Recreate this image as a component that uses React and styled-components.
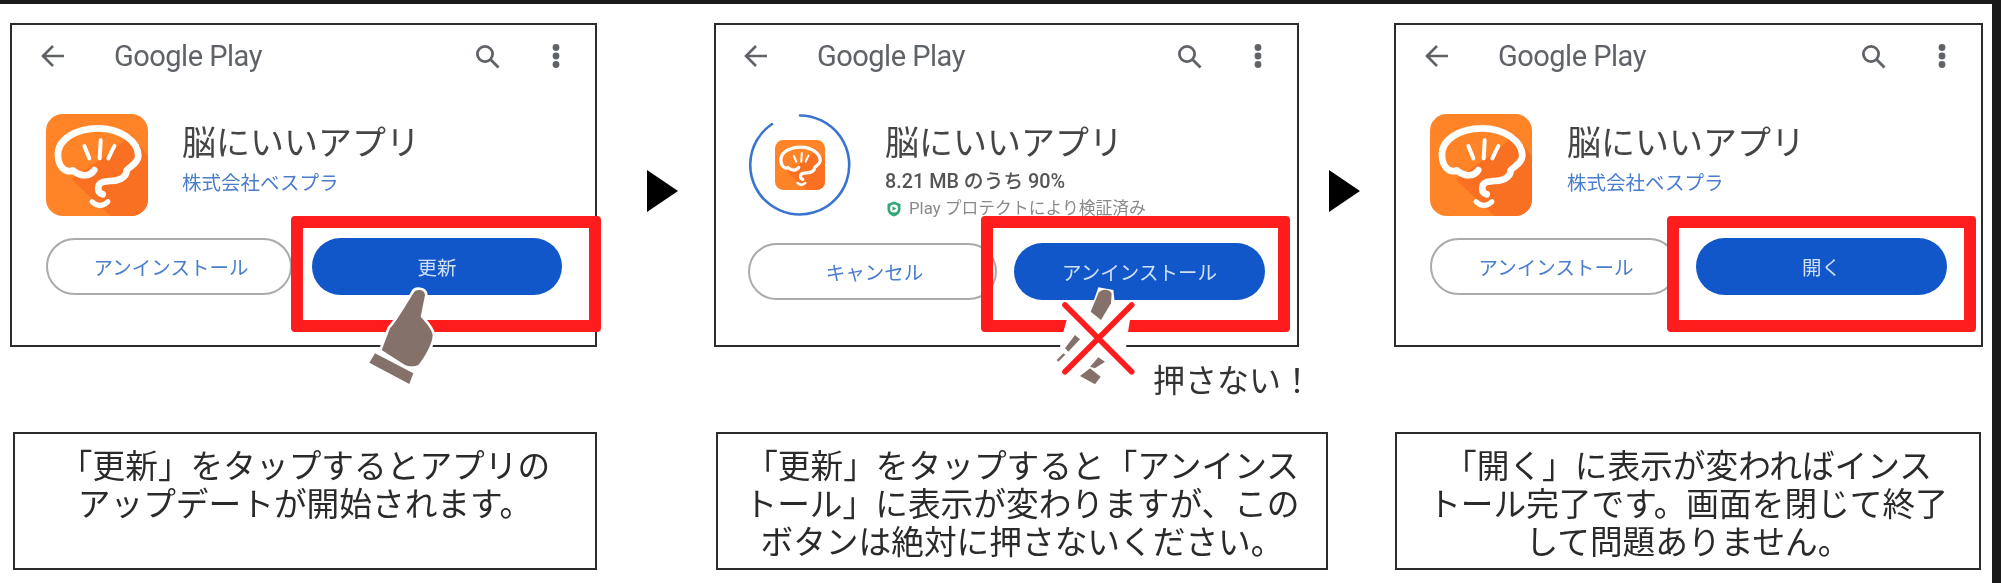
import React from "react";
import styled, { createGlobalStyle } from "styled-components";

const Global = createGlobalStyle`
  html, body { margin: 0; padding: 0; background: #fff; }
  body { font-family: "Noto Sans CJK JP", "Noto Sans", sans-serif; }
`;

const Frame = styled.div`
  width: 2001px;
  height: 583px;
  box-sizing: border-box;
  border-top: 4px solid #1a1a1a;
  border-right: 9px solid #1a1a1a;
  overflow: hidden;
  background: #fff;
`;
const Content = styled.div`
  padding: 19px 0 0 10px;
  filter: blur(0.75px);
`;
const PanelRow = styled.div`
  display: flex;
  align-items: flex-start;
`;
const Panel = styled.section`
  position: relative;
  box-sizing: border-box;
  width: ${(p) => p.$width}px;
  height: 324px;
  border: 2px solid #2c2c2c;
  padding-left: ${(p) => p.$pad}px;
  background: #fff;
`;
const Header = styled.header`
  display: flex;
  align-items: center;
  height: 62px;
  margin-left: -5px;
  padding-right: 35px;
  color: #5f6368;
`;
const Brand = styled.span`
  margin-left: 49px;
  font-family: "Roboto", sans-serif;
  font-size: 29px;
  letter-spacing: -0.5px;
  color: #5f6368;
`;
const HeaderIcons = styled.div`
  display: flex;
  align-items: center;
  gap: 52px;
  margin-left: auto;
`;
const AppRow = styled.div`
  display: flex;
  gap: ${(p) => p.$gap}px;
  height: 103px;
  margin-top: 26px;
`;
const IconSlot = styled.div`
  display: grid;
  place-items: center;
  width: 102px;
  height: 103px;
  flex: none;
  & > * { grid-area: 1 / 1; }
`;
const AppInfo = styled.div`
  padding-top: 8px;
  white-space: nowrap;
`;
const AppName = styled.div`
  font-size: 34px;
  line-height: 40px;
  color: #454545;
`;
const Publisher = styled.div`
  margin-top: 8px;
  font-size: 19.5px;
  line-height: 26px;
  color: #4a7dcc;
`;
const Progress = styled.div`
  margin-top: 8px;
  font-family: "Roboto", "Noto Sans CJK JP", sans-serif;
  font-size: 19.8px;
  font-weight: 500;
  line-height: 26px;
  color: #555;
`;
const Verified = styled.div`
  display: flex;
  align-items: center;
  gap: 8px;
  margin-left: 2px;
  font-family: "Roboto", "Noto Sans CJK JP", sans-serif;
  font-size: 16.8px;
  line-height: 27px;
  color: #8a8a8a;
`;
const ButtonRow = styled.div`
  display: flex;
  gap: ${(p) => p.$gap}px;
  margin: ${(p) => p.$top}px 0 0 ${(p) => p.$shift}px;
`;
const OutlineButton = styled.div`
  box-sizing: border-box;
  display: flex;
  align-items: center;
  justify-content: center;
  width: ${(p) => p.$width}px;
  height: 57px;
  padding-left: 4px;
  border: 2px solid #ababab;
  border-radius: 29px;
  font-size: 19.5px;
  color: #4a7dcc;
  background: #fff;
`;
const FilledButton = styled.div`
  display: flex;
  align-items: center;
  justify-content: center;
  width: ${(p) => p.$width}px;
  height: 57px;
  border-radius: 29px;
  font-size: 19.5px;
  color: #cfe0f6;
  background: #1257c9;
`;
const Highlight = styled.div`
  position: absolute;
  box-sizing: border-box;
  left: ${(p) => p.$left}px;
  top: 191px;
  width: ${(p) => p.$width}px;
  height: 116px;
  border: 12px solid #ff1c1c;
  border-radius: 4px;
`;
const Overlay = styled.svg`
  position: absolute;
  left: ${(p) => p.$left}px;
  top: ${(p) => p.$top}px;
  width: 130px;
  height: 130px;
  overflow: visible;
`;
const Warning = styled.div`
  position: absolute;
  left: 437px;
  top: 333px;
  font-size: 32px;
  line-height: 40px;
  color: #333;
  white-space: nowrap;
`;
const StepArrow = styled.div`
  flex: none;
  width: 0;
  height: 0;
  margin: 147px ${(p) => p.$after}px 0 ${(p) => p.$before}px;
  border-left: 31px solid #000;
  border-top: 21.5px solid transparent;
  border-bottom: 21.5px solid transparent;
`;
const CaptionRow = styled.div`
  display: flex;
  margin: 85px 0 0 3px;
`;
const Caption = styled.p`
  box-sizing: border-box;
  width: ${(p) => p.$width}px;
  height: 138px;
  margin: 0 0 0 ${(p) => p.$gap}px;
  padding-top: 11px;
  border: 2px solid #2c2c2c;
  font-size: 32.7px;
  line-height: 38px;
  text-align: center;
  color: #2a2a2a;
  white-space: nowrap;
`;

const Back = () => (
  <svg width="24" height="24" viewBox="0 0 24 24" fill="none" stroke="#5f6368" strokeWidth="2.6">
    <path d="M23 12H2M12 2 2 12l10 10" />
  </svg>
);
const SearchIcon = () => (
  <svg width="25" height="25" viewBox="0 0 25 25" fill="none" stroke="#5f6368" strokeWidth="2.8">
    <circle cx="10" cy="10" r="7.6" />
    <path d="m15.5 15.5 8 8" />
  </svg>
);
const MoreIcon = () => (
  <svg width="8" height="24" viewBox="0 0 8 24" fill="#5f6368">
    <circle cx="4" cy="3.5" r="3.4" />
    <circle cx="4" cy="12" r="3.4" />
    <circle cx="4" cy="20.5" r="3.4" />
  </svg>
);
const Logo = ({ size, id }) => (
  <svg width={size} height={size} viewBox="48 39 306 306">
    <defs>
      <clipPath id={id}>
        <rect x="48" y="39" width="306" height="306" rx="50" />
      </clipPath>
    </defs>
    <g clipPath={`url(#${id})`}>
      <rect x="48" y="39" width="306" height="306" fill="#ff8427" />
      <path d="M125 235 240 345H354V165L305 100 235 160Z" fill="#fa7022" />
    </g>
    <g fill="none" stroke="#fff" strokeLinecap="round" strokeLinejoin="round">
      <path
        strokeWidth="20"
        d="M193 207C180 228 150 228 128 208 105 218 85 195 84 165 80 115 140 82 205 82 270 82 325 120 325 165 322 190 300 195 290 208 290 232 262 240 240 240L218 243C200 250 200 275 218 280"
      />
      <path strokeWidth="15" d="M186 302Q210 325 234 302" />
      <path strokeWidth="12" d="M163 135 178 172M212 118 209 172M253 135 235 172" />
    </g>
  </svg>
);
const Ring = () => (
  <svg width="102" height="102" viewBox="0 0 102 102" fill="none" stroke="#3a74d0" strokeWidth="2.6" strokeLinecap="round">
    <path d="M51 1.5A49.5 49.5 0 1 1 23 10" />
  </svg>
);
const Shield = () => (
  <svg width="14" height="16" viewBox="0 0 14 16">
    <path d="M7 .5 13.5 3v5c0 4-3 6.500-6.500 7.500C3.500 14.500.5 12 .5 8V3Z" fill="#35a77a" />
    <circle cx="7" cy="7.500" r="4" fill="#fff" />
    <path d="M5.500 5.200 9.500 7.500 5.500 9.800Z" fill="#35a77a" />
  </svg>
);
const Hand = ({ left, top }) => (
  <Overlay $left={left} $top={top} viewBox="0 0 390 390">
    <g fill="#84726a" stroke="#fff" strokeWidth="16" strokeLinejoin="round" paintOrder="stroke">
      <path d="M190 100C195 86 224 86 225 105L212 170C225 185 245 205 248 225 248 250 225 290 205 315 195 320 175 320 165 315L95 270 120 205C135 190 150 165 190 100Z" />
      <path d="M75 280 190 340 178 372 58 308Z" />
    </g>
  </Overlay>
);
const CrossedHand = ({ left, top }) => (
  <Overlay $left={left} $top={top} viewBox="0 0 390 390">
    <path d="M205 52 250 60 255 105 300 150 290 210 285 290 215 345H150L80 285 95 205 110 150 185 110Z" fill="#fff" />
    <g fill="#84726a">
      <path d="M205 70C212 54 242 56 245 72L243 100 213 150 182 125Z" />
      <path d="M135 195 150 208 115 245 105 235Z" />
      <path d="M100 250 106 254 85 275 80 270Z" />
      <path d="M205 262 225 275 195 295 180 290Z" />
      <path d="M150 318 180 295 212 320 195 343Z" />
    </g>
    <g fill="none" stroke="#ff1c1c" strokeWidth="17" strokeLinecap="round">
      <path d="M105 105 305 305M305 105 105 305" />
    </g>
  </Overlay>
);

const Title = () => <AppName>脳にいいアプリ</AppName>;

const BarHeader = () => (
  <Header>
    <Back />
    <Brand>Google Play</Brand>
    <HeaderIcons>
      <SearchIcon />
      <MoreIcon />
    </HeaderIcons>
  </Header>
);

export default function App() {
  return (
    <Frame>
      <Global />
      <Content>
        <PanelRow>
          <Panel $width={587} $pad={34}>
            <BarHeader />
            <AppRow $gap={34}>
              <IconSlot>
                <Logo size={102} id="logo-a" />
              </IconSlot>
              <AppInfo>
                <Title />
                <Publisher>株式会社ベスプラ</Publisher>
              </AppInfo>
            </AppRow>
            <ButtonRow $gap={20} $top={22} $shift={0}>
              <OutlineButton $width={246}>アンインストール</OutlineButton>
              <FilledButton $width={250}>更新</FilledButton>
            </ButtonRow>
            <Highlight $left={279} $width={310} />
            <Hand left={338} top={235} />
          </Panel>
          <StepArrow $before={50} $after={36} />
          <Panel $width={585} $pad={33}>
            <BarHeader />
            <AppRow $gap={34}>
              <IconSlot>
                <Ring />
                <Logo size={50} id="logo-b" />
              </IconSlot>
              <AppInfo>
                <Title />
                <Progress>8.21 MB のうち 90%</Progress>
                <Verified>
                  <Shield />
                  Play プロテクトにより検証済み
                </Verified>
              </AppInfo>
            </AppRow>
            <ButtonRow $gap={17} $top={27} $shift={-1}>
              <OutlineButton $width={249}>キャンセル</OutlineButton>
              <FilledButton $width={251}>アンインストール</FilledButton>
            </ButtonRow>
            <Highlight $left={265} $width={309} />
            <CrossedHand left={314} top={245} />
            <Warning>押さない！</Warning>
          </Panel>
          <StepArrow $before={30} $after={34} />
          <Panel $width={589} $pad={34}>
            <BarHeader />
            <AppRow $gap={35}>
              <IconSlot>
                <Logo size={102} id="logo-c" />
              </IconSlot>
              <AppInfo>
                <Title />
                <Publisher>株式会社ベスプラ</Publisher>
              </AppInfo>
            </AppRow>
            <ButtonRow $gap={18} $top={22} $shift={0}>
              <OutlineButton $width={248}>アンインストール</OutlineButton>
              <FilledButton $width={251}>開く</FilledButton>
            </ButtonRow>
            <Highlight $left={271} $width={309} />
          </Panel>
        </PanelRow>
        <CaptionRow>
          <Caption $width={584} $gap={0}>
            「更新」をタップするとアプリの
            <br />
            アップデートが開始されます。
          </Caption>
          <Caption $width={612} $gap={119}>
            「更新」をタップすると「アンインス
            <br />
            トール」に表示が変わりますが、この
            <br />
            ボタンは絶対に押さないください。
          </Caption>
          <Caption $width={586} $gap={67}>
            「開く」に表示が変わればインス
            <br />
            トール完了です。画面を閉じて終了
            <br />
            して問題ありません。
          </Caption>
        </CaptionRow>
      </Content>
    </Frame>
  );
}
